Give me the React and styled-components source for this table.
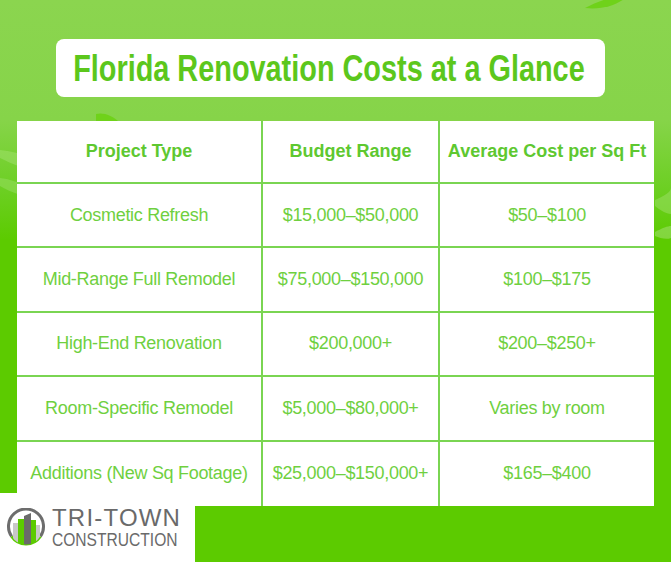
import React from "react";
import styled, { createGlobalStyle } from "styled-components";

const GlobalStyle = createGlobalStyle`
  html, body {
    margin: 0;
    padding: 0;
    background: #5ccb00;
  }
`;

const rows = [
  ["Cosmetic Refresh", "$15,000–$50,000", "$50–$100"],
  ["Mid-Range Full Remodel", "$75,000–$150,000", "$100–$175"],
  ["High-End Renovation", "$200,000+", "$200–$250+"],
  ["Room-Specific Remodel", "$5,000–$80,000+", "Varies by room"],
  ["Additions (New Sq Footage)", "$25,000–$150,000+", "$165–$400"],
];

const headers = ["Project Type", "Budget Range", "Average Cost per Sq Ft"];

const Leaves = () => (
  <DecorSvg width="671" height="562" viewBox="0 0 671 562">
    <path d="M585 8 C600 0 615 -4 630 -6 C620 4 605 10 585 8 Z" fill="#6fd21a" />
    <path d="M0 150 C20 152 40 160 48 172 C30 172 12 164 0 158 Z" fill="#9ee06a" opacity="0.55" />
    <path d="M0 178 C18 180 36 190 44 200 C26 198 10 192 0 186 Z" fill="#9ee06a" opacity="0.45" />
    <path d="M96 114 C104 112 112 116 118 121 L96 121 Z" fill="#6fd21a" />
    <path d="M655 200 C664 196 671 192 671 188 L671 214 C666 214 660 210 655 206 Z" fill="#9ee06a" opacity="0.5" />
    <path d="M655 232 C662 228 668 226 671 226 L671 238 C666 240 660 238 655 236 Z" fill="#a7e27a" opacity="0.5" />
  </DecorSvg>
);

const LogoMark = () => (
  <MarkSvg width="40" height="40" viewBox="0 0 40 40">
    <defs>
      <clipPath id="ring-inside">
        <circle cx="20" cy="20" r="16.5" />
      </clipPath>
    </defs>
    <path d="M5.6 28.5 A17.5 17.5 0 1 1 34.4 28.5" fill="none" stroke="#6d6d6d" strokeWidth="3" />
    <path d="M34.4 28.5 A17.5 17.5 0 0 1 5.6 28.5" fill="none" stroke="#5ccb00" strokeWidth="3" />
    <g clipPath="url(#ring-inside)">
      <rect x="7" y="15" width="5" height="25" fill="#c8c8c8" />
      <rect x="12" y="11" width="6" height="29" fill="#5ccb00" />
      <path d="M18 8 L25 5 L25 40 L18 40 Z" fill="#6a6a6a" />
      <rect x="25" y="12" width="5" height="28" fill="#5ccb00" />
      <rect x="30" y="17" width="4" height="23" fill="#c8c8c8" />
    </g>
  </MarkSvg>
);

export default function App() {
  return (
    <>
      <GlobalStyle />
      <Page>
        <Leaves />
        <TitleBox>
          <Title>Florida Renovation Costs at a Glance</Title>
        </TitleBox>
        <Table>
          {headers.map((h, i) => (
            <HeadCell key={h} $last={i === 2}>
              {h}
            </HeadCell>
          ))}
          {rows.map((r, ri) =>
            r.map((c, ci) => (
              <Cell key={ri + "-" + ci} $last={ci === 2} $bottom={ri === rows.length - 1}>
                {c}
              </Cell>
            ))
          )}
        </Table>
        <Footer>
          <LogoPanel>
            <LogoMark />
            <LogoText>
              <BrandName>TRI-TOWN</BrandName>
              <BrandSub>CONSTRUCTION</BrandSub>
            </LogoText>
          </LogoPanel>
          <GreenBlock />
        </Footer>
      </Page>
    </>
  );
}

const Page = styled.div`
  position: relative;
  width: 671px;
  height: 562px;
  overflow: hidden;
  padding-top: 39px;
  box-sizing: border-box;
  background: linear-gradient(180deg, #8bd54f 0px, #86d449 120px, #6ccf22 190px, #5ccb00 240px, #5ccb00 100%);
  font-family: "Liberation Sans", Arial, sans-serif;
`;

const DecorSvg = styled.svg`
  position: absolute;
  top: 0;
  left: 0;
  pointer-events: none;
`;

const MarkSvg = styled.svg`
  flex: none;
`;

const TitleBox = styled.div`
  position: relative;
  margin-left: 56px;
  width: 549px;
  height: 58px;
  background: #fff;
  border-radius: 8px;
  display: flex;
  align-items: center;
  justify-content: center;
`;

/* no narrow face is installed, so the bold sans is squeezed to the poster's width */
const Title = styled.h1`
  flex: none;
  margin: 0 0 0 -4px;
  font-family: "Liberation Sans", Arial, sans-serif;
  font-weight: 700;
  font-size: 37px;
  line-height: 1;
  color: #5cc71c;
  white-space: nowrap;
  transform: scaleX(0.78);
`;

const Table = styled.div`
  position: relative;
  margin: 24px 0 0 17px;
  width: 637px;
  display: grid;
  grid-template-columns: 246px 177px 214px;
  grid-template-rows: 63px repeat(5, 64.4px);
  background: #fff;
`;

const HeadCell = styled.div`
  display: flex;
  align-items: center;
  justify-content: center;
  text-align: center;
  font-weight: 700;
  font-size: 18px;
  color: #5ec830;
  border-right: ${(p) => (p.$last ? "none" : "2px solid #7ad552")};
  border-bottom: 2px solid #7ad552;
`;

const Cell = styled.div`
  display: flex;
  align-items: center;
  justify-content: center;
  text-align: center;
  font-size: 18px;
  color: #6fd03f;
  letter-spacing: -0.3px;
  white-space: nowrap;
  border-right: ${(p) => (p.$last ? "none" : "2px solid #7ad552")};
  border-bottom: ${(p) => (p.$bottom ? "none" : "2px solid #7ad552")};
`;

const Footer = styled.div`
  position: relative;
  display: flex;
  height: 56px;
`;

const LogoPanel = styled.div`
  width: 195px;
  height: 69px;
  margin-top: -13px;
  background: #fff;
  display: flex;
  align-items: center;
  gap: 6px;
  padding: 1px 0 0 6px;
  box-sizing: border-box;
  overflow: hidden;
`;

const LogoText = styled.div`
  flex: none;
  display: flex;
  flex-direction: column;
  color: #6a6a6a;
  padding-top: 1px;
`;

const BrandName = styled.span`
  font-size: 24px;
  line-height: 23px;
  letter-spacing: 1.2px;
`;

const BrandSub = styled.span`
  font-size: 19px;
  line-height: 21px;
  transform: scaleX(0.82);
  transform-origin: left center;
  white-space: nowrap;
`;

const GreenBlock = styled.div`
  flex: 1;
  background: #5ccb00;
`;
